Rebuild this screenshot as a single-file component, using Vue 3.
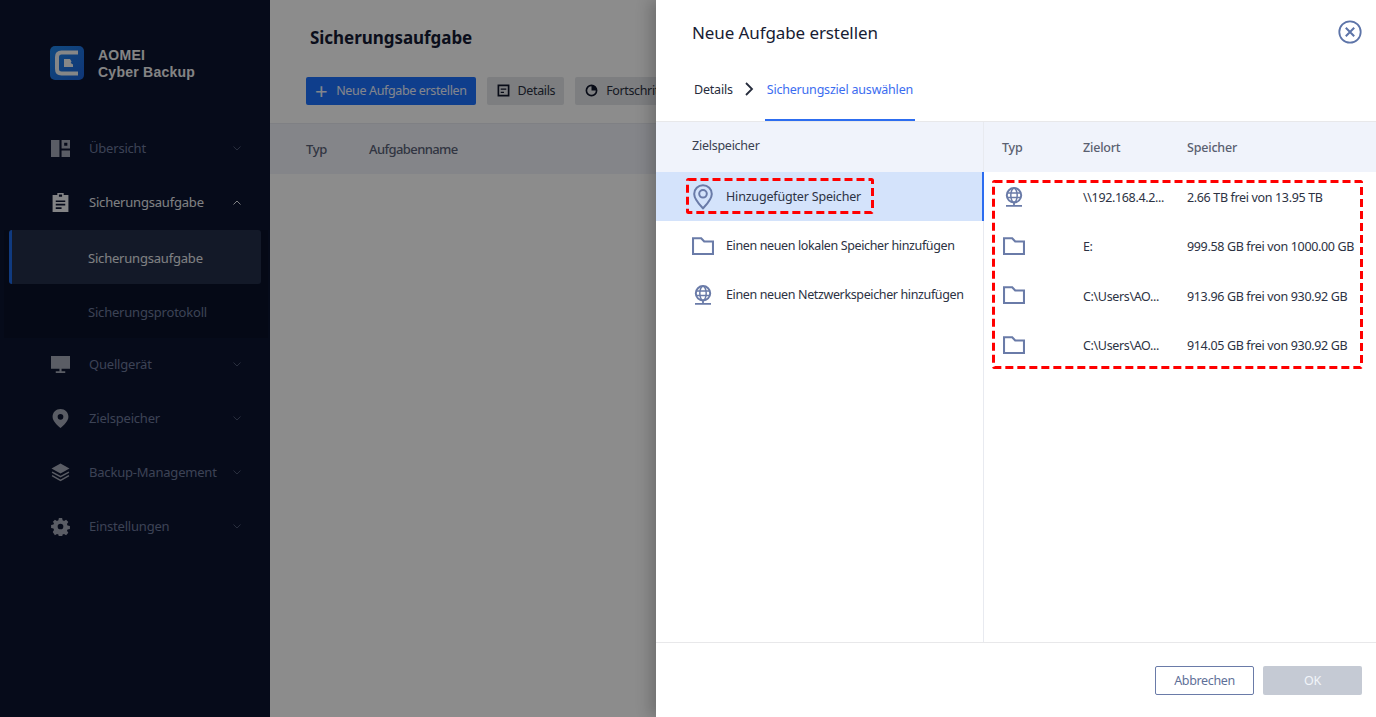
<script setup>
const nav = [
  { label: 'Übersicht', icon: 'dash', open: false },
  { label: 'Sicherungsaufgabe', icon: 'task', open: true, active: true },
  { label: 'Quellgerät', icon: 'monitor' },
  { label: 'Zielspeicher', icon: 'pin' },
  { label: 'Backup-Management', icon: 'layers' },
  { label: 'Einstellungen', icon: 'gear' }
]
const targets = [
  { icon: 'i-pin', label: 'Hinzugefügter Speicher', selected: true },
  { icon: 'i-folder', label: 'Einen neuen lokalen Speicher hinzufügen' },
  { icon: 'i-globe', label: 'Einen neuen Netzwerkspeicher hinzufügen' }
]
const rows = [
  { icon: 'i-globe', path: '\\\\192.168.4.2...', size: '2.66 TB frei von 13.95 TB' },
  { icon: 'i-folder', path: 'E:', size: '999.58 GB frei von 1000.00 GB' },
  { icon: 'i-folder', path: 'C:\\Users\\AO...', size: '913.96 GB frei von 930.92 GB' },
  { icon: 'i-folder', path: 'C:\\Users\\AO...', size: '914.05 GB frei von 930.92 GB' }
]
</script>

<template>
  <div class="page">
    <svg class="defs" width="0" height="0" aria-hidden="true">
      <symbol id="dash" viewBox="0 0 18 18">
        <path fill="currentColor" fill-rule="evenodd" d="M0 1h8v16H0zM10 1h8v8h-8zM12.500 3.500v3h3v-3zM10 11h8v6h-8z"/>
      </symbol>
      <symbol id="task" viewBox="0 0 18 18">
        <path fill="currentColor" fill-rule="evenodd" d="M6 0h6v2h4.500v16h-15V2H6zM7.500 1.500v2h3v-2zM4.500 7v1.500h9V7zM4.500 10.300v1.500h9v-1.500zM4.500 13.600v1.500h5.500v-1.500z"/>
      </symbol>
      <symbol id="monitor" viewBox="0 0 18 18">
        <path fill="currentColor" d="M0 1h18v12H0zM8 13h2v2.500h3.500V17h-9v-1.500H8z"/>
      </symbol>
      <symbol id="pin" viewBox="0 0 18 18">
        <path fill="currentColor" fill-rule="evenodd" d="M9 0c4.200 0 7.500 3.200 7.500 7.300C16.500 11.500 12 15.500 9 18 6 15.500 1.500 11.500 1.500 7.300 1.500 3.200 4.800 0 9 0zM9 4.700a2.700 2.700 0 1 0 0 5.400 2.700 2.700 0 0 0 0-5.400z"/>
      </symbol>
      <symbol id="layers" viewBox="0 0 18 18">
        <path fill="currentColor" d="M9 .5l8.500 4.700L9 10 .5 5.200z"/>
        <path fill="none" stroke="currentColor" stroke-width="1.300" d="M1 8.600l8 4.400 8-4.400M1 12l8 4.500 8-4.500"/>
      </symbol>
      <symbol id="gear" viewBox="0 0 18 18">
        <path fill="currentColor" fill-rule="evenodd" d="M7.300 0h3.400l.5 2.500 1.500.7 2.200-1.300 2.300 2.400-1.400 2.100.6 1.500 2.500.6v3l-2.500.6-.6 1.500 1.400 2.100-2.300 2.400-2.200-1.300-1.500.7-.5 2.500H7.300l-.5-2.500-1.500-.7-2.200 1.300L.8 14.700l1.400-2.100-.6-1.500L-.9 10.500v-3l2.500-.6.600-1.500L.8 4.300l2.300-2.400 2.200 1.300 1.500-.7zM9 6a3 3 0 1 0 0 6 3 3 0 0 0 0-6z" transform="translate(.9 .9) scale(.9)"/>
      </symbol>
      <symbol id="i-pin" viewBox="0 0 20 26">
        <path fill="none" stroke="#6a7ba8" stroke-width="2" d="M10 1.200c4.900 0 8.800 3.900 8.800 8.700 0 5.300-5.200 10.500-8.800 14.400C6.400 20.400 1.200 15.200 1.200 9.900 1.200 5.100 5.100 1.200 10 1.200z"/>
        <circle cx="10" cy="9.800" r="3.800" fill="none" stroke="#6a7ba8" stroke-width="2"/>
      </symbol>
      <symbol id="i-folder" viewBox="0 0 22 18">
        <path fill="none" stroke="#6a7ba8" stroke-width="2.100" d="M1 17V1.200h8.200l3 3.300H21V17z"/>
      </symbol>
      <symbol id="i-globe" viewBox="0 0 20 20">
        <circle cx="10" cy="8.300" r="7.200" fill="none" stroke="#6a7ba8" stroke-width="2"/>
        <ellipse cx="10" cy="8.300" rx="3.200" ry="7" fill="none" stroke="#6a7ba8" stroke-width="1.500"/>
        <path fill="none" stroke="#6a7ba8" stroke-width="1.500" d="M3 6h14M3 10.600h14"/>
        <path fill="none" stroke="#6a7ba8" stroke-width="1.800" d="M10 15.300v3M2 18.800h16"/>
      </symbol>
    </svg>

    <aside class="sidebar">
      <div class="brand">
        <svg class="logo" viewBox="0 0 34 34">
          <defs>
            <linearGradient id="lg" x1="0" y1="0" x2="1" y2="1">
              <stop offset="0" stop-color="#1f86e8"/>
              <stop offset="1" stop-color="#1d62d8"/>
            </linearGradient>
          </defs>
          <rect width="34" height="34" rx="5" fill="url(#lg)"/>
          <path fill="none" stroke="#f2f4f6" stroke-width="4" d="M28 6.500H11.500Q7 6.500 7 11v12q0 4.500 4.500 4.500H28"/>
          <path fill="#f2f4f6" d="M14 13h6l1.500 2.500-.8 1.500 2.300 1.500V21H14z"/>
        </svg>
        <div class="brand-text">AOMEI<br>Cyber Backup</div>
      </div>
      <nav class="nav">
        <template v-for="item in nav" :key="item.label">
          <div class="nav-item" :class="{ on: item.active }">
            <svg class="nav-icon"><use :href="'#' + item.icon" /></svg>
            <span class="nav-label">{{ item.label }}</span>
            <svg class="caret" viewBox="0 0 8 5">
              <path fill="none" stroke="currentColor" stroke-width="1" :d="item.open ? 'M.5 4.500L4 1l3.500 3.500' : 'M.5.500L4 4 7.500.500'"/>
            </svg>
          </div>
          <div v-if="item.open" class="sub">
            <div class="sub-item current">Sicherungsaufgabe</div>
            <div class="sub-item">Sicherungsprotokoll</div>
          </div>
        </template>
      </nav>
    </aside>

    <main class="main">
      <h1 class="main-title">Sicherungsaufgabe</h1>
      <div class="toolbar">
        <button class="btn primary"><span class="plus">+</span>Neue Aufgabe erstellen</button>
        <button class="btn">
          <svg class="btn-icon" viewBox="0 0 14 14"><path fill="none" stroke="currentColor" stroke-width="1.800" d="M1.500 1.500h11v11h-11z"/><path fill="none" stroke="currentColor" stroke-width="1.500" d="M4 5.500h6M4 9h3.500"/></svg>
          Details
        </button>
        <button class="btn">
          <svg class="btn-icon" viewBox="0 0 14 14"><circle cx="7" cy="7" r="5.500" fill="none" stroke="currentColor" stroke-width="1.800"/><path fill="currentColor" d="M7 7V1.500A5.500 5.500 0 0 1 12.500 7z"/></svg>
          Fortschritt
        </button>
      </div>
      <div class="thead">
        <span class="th-type">Typ</span>
        <span class="th-name">Aufgabenname</span>
      </div>
    </main>

    <div class="scrim"></div>

    <section class="drawer">
      <header class="drawer-head">
        <h2 class="drawer-title">Neue Aufgabe erstellen</h2>
        <svg class="close" viewBox="0 0 24 24">
          <circle cx="12" cy="12" r="10.700" fill="none" stroke="#5d74a8" stroke-width="1.800"/>
          <path fill="none" stroke="#5d74a8" stroke-width="2" d="M7.800 7.800l8.400 8.400M16.200 7.800l-8.400 8.400"/>
        </svg>
      </header>
      <div class="steps">
        <span class="step">Details</span>
        <svg class="step-arrow" viewBox="0 0 9 14"><path fill="none" stroke="#262c3c" stroke-width="1.800" d="M1 1l6 6-6 6"/></svg>
        <span class="step active">Sicherungsziel auswählen</span>
      </div>
      <div class="panes">
        <div class="left">
          <div class="left-head">Zielspeicher</div>
          <div v-for="t in targets" :key="t.label" class="target" :class="{ selected: t.selected }">
            <span class="icon-cell"><svg class="row-icon" :class="t.icon"><use :href="'#' + t.icon" /></svg></span>
            <span class="target-label">{{ t.label }}</span>
          </div>
        </div>
        <div class="right">
          <div class="grid-row right-head">
            <span>Typ</span><span>Zielort</span><span>Speicher</span>
          </div>
          <div v-for="(r, i) in rows" :key="i" class="grid-row body-row">
            <span class="type-cell"><svg class="row-icon" :class="r.icon"><use :href="'#' + r.icon" /></svg></span>
            <span class="cell">{{ r.path }}</span>
            <span class="cell">{{ r.size }}</span>
          </div>
        </div>
      </div>
      <footer class="foot">
        <button class="fbtn cancel">Abbrechen</button>
        <button class="fbtn ok">OK</button>
      </footer>

      <svg class="mark mark-a" width="188" height="36"><rect x="1.500" y="1.500" width="185" height="33" rx="1" /></svg>
      <svg class="mark mark-b" width="371" height="189"><rect x="1.500" y="1.500" width="368" height="186" rx="1" /></svg>
    </section>
  </div>
</template>

<style scoped>
.page {
  position: relative;
  display: flex;
  width: 1376px;
  height: 717px;
  overflow: hidden;
  background: #fff;
  font-family: "Noto Sans", "Open Sans", sans-serif;
  font-size: 13px;
}
.defs { position: absolute; }
.sidebar {
  flex: none;
  width: 270px;
  background: #0c1430;
  color: #6e7a9c;
  letter-spacing: -.2px;
}
.brand {
  display: flex;
  align-items: center;
  gap: 14px;
  padding: 46px 0 0 50px;
  height: 34px;
}
.logo { width: 34px; height: 34px; flex: none; }
.brand-text {
  margin-top: 2px;
  font-family: "Liberation Sans", Arial, sans-serif;
  font-weight: 700;
  font-size: 14px;
  line-height: 17px;
  letter-spacing: .25px;
  color: #f0f0f0;
}
.nav { padding-top: 41px; }
.nav-item {
  display: flex;
  align-items: center;
  height: 54px;
  padding-left: 51px;
}
.nav-item.on { color: #e8eaee; }
.nav-icon { width: 19px; height: 19px; flex: none; color: #a5aab8; margin-right: 19px; }
.nav-item.on .nav-icon { color: #eef0f4; }
.nav-label { flex: 1; }
.caret { width: 8px; height: 5px; margin-right: 29px; color: #4a5470; }
.nav-item.on .caret { color: #e8eaee; }
.sub {
  margin: 1px 2px -1px 4px;
  background: #0a1229;
}
.sub-item {
  display: flex;
  align-items: center;
  height: 54px;
  box-sizing: border-box;
  padding: 2px 0 0 84px;
}
.sub-item.current {
  margin: 0 7px 0 5px;
  padding-left: 76px;
  background: #242f4a;
  border-left: 3px solid #1e6ae8;
  border-radius: 3px;
  color: #e8eaee;
}
.main { flex: 1; min-width: 0; color: #1c2233; background: #fff; }
.main-title {
  margin: 0;
  padding: 26px 0 0 40px;
  font-size: 17px;
  line-height: 24px;
  font-weight: 700;
  letter-spacing: -.05px;
  color: #141a33;
}
.toolbar {
  display: flex;
  gap: 11px;
  padding: 27px 0 0 36px;
}
.btn {
  display: flex;
  align-items: center;
  height: 28px;
  padding: 0 9px 2px 10px;
  border: 0;
  border-radius: 2px;
  background: #e4e6ea;
  color: #2a3040;
  font: inherit;
  font-size: 12.500px;
  letter-spacing: -.36px;
  white-space: nowrap;
}
.btn.primary { background: #1c72ff; color: #eef3ff; padding: 0 9px 2px 9px; }
.plus { font-size: 22px; line-height: 22px; font-weight: 400; margin-right: 9px; }
.btn-icon { width: 13px; height: 13px; margin-right: 8px; color: #10162a; }
.thead {
  display: flex;
  align-items: center;
  height: 50px;
  margin-top: 18px;
  padding-left: 36px;
  background: #f1f3f9;
  border-top: 1px solid #e8eaf0;
  color: #5a6278;
  font-size: 13px;
  font-weight: 500;
}
.th-type { width: 63px; letter-spacing: -.3px; }
.th-name { letter-spacing: -.6px; }
.scrim {
  position: absolute;
  inset: 0;
  background: rgba(0, 0, 0, .45);
}
.drawer {
  position: absolute;
  top: 0;
  right: 0;
  bottom: 0;
  width: 720px;
  display: flex;
  flex-direction: column;
  background: #fff;
  box-shadow: -6px 0 14px rgba(0, 0, 0, .2);
}
.drawer-head {
  display: flex;
  align-items: center;
  justify-content: space-between;
  height: 65px;
  padding: 0 14px 0 36px;
  flex: none;
}
.drawer-title {
  margin: 0;
  font-size: 17px;
  font-weight: 400;
  letter-spacing: -.1px;
  color: #171c33;
}
.close { width: 24px; height: 24px; margin-top: -2px; }
.steps {
  display: flex;
  align-items: flex-start;
  height: 56px;
  padding-left: 38px;
  flex: none;
  border-bottom: 1px solid #e8e8ea;
  font-size: 12.500px;
  letter-spacing: -.2px;
}
.step { color: #262c3c; line-height: 50px; }
.step-arrow { width: 9px; height: 14px; margin: 17px 11px 0 12px; flex: none; }
.step.active {
  color: #3b6cf0;
  padding: 0 2px;
  height: 56px;
  box-sizing: border-box;
  border-bottom: 2px solid #2d6df0;
}
.panes { flex: 1; display: flex; min-height: 0; }
.left { width: 328px; flex: none; border-right: 1px solid #e8eaf0; box-sizing: border-box; color: #2c3243; }
.left-head {
  height: 50px;
  padding: 14px 0 0 36px;
  box-sizing: border-box;
  background: #f0f3fb;
  font-size: 12.500px;
  line-height: 20px;
  letter-spacing: -.25px;
  color: #3a4050;
}
.target {
  display: flex;
  align-items: center;
  height: 49px;
  padding-left: 36px;
  font-size: 12.500px;
  letter-spacing: -.37px;
}
.target-label { padding-bottom: 1px; }
.target.selected {
  background: #d4e3fb;
  margin-right: -1px;
  border-right: 2px solid #2d6df0;
  letter-spacing: -.18px;
}
.icon-cell { width: 34px; display: flex; }
.row-icon { display: block; }
.i-pin { width: 20px; height: 26px; margin-left: 1px; }
.i-folder { width: 22px; height: 18px; }
.i-globe { width: 20px; height: 20px; margin-left: 1px; }
.right { flex: 1; color: #2c3243; font-size: 12.500px; letter-spacing: -.35px; }
.grid-row {
  display: grid;
  grid-template-columns: 81px 104px 1fr;
  align-items: center;
  padding-left: 18px;
}
.right-head {
  height: 50px;
  background: #f0f3fb;
  color: #5a6070;
  font-weight: 500;
  letter-spacing: -.2px;
}
.body-row { height: 49.330px; }
.cell { padding-top: 2px; }
.type-cell { display: flex; margin-left: 1px; }
.foot {
  flex: none;
  height: 75px;
  box-sizing: border-box;
  border-top: 1px solid #e8e8ea;
  display: flex;
  justify-content: flex-end;
  align-items: flex-start;
  gap: 9px;
  padding: 23px 14px 0 0;
}
.fbtn {
  width: 99px;
  height: 29px;
  border-radius: 2px;
  font: inherit;
  font-size: 12.500px;
  letter-spacing: -.35px;
}
.cancel { background: #fff; border: 1px solid #6a7ba8; color: #5f7098; }
.ok { background: #c5cad4; border: 0; color: #f2f5fa; }
.mark { position: absolute; fill: none; }
.mark rect { fill: none; stroke: #f00; stroke-width: 3; stroke-dasharray: 8 4; }
.mark-a { left: 30px; top: 178px; }
.mark-b { left: 336px; top: 180px; }
</style>

<style>
html, body { margin: 0; overflow: hidden; }
</style>
